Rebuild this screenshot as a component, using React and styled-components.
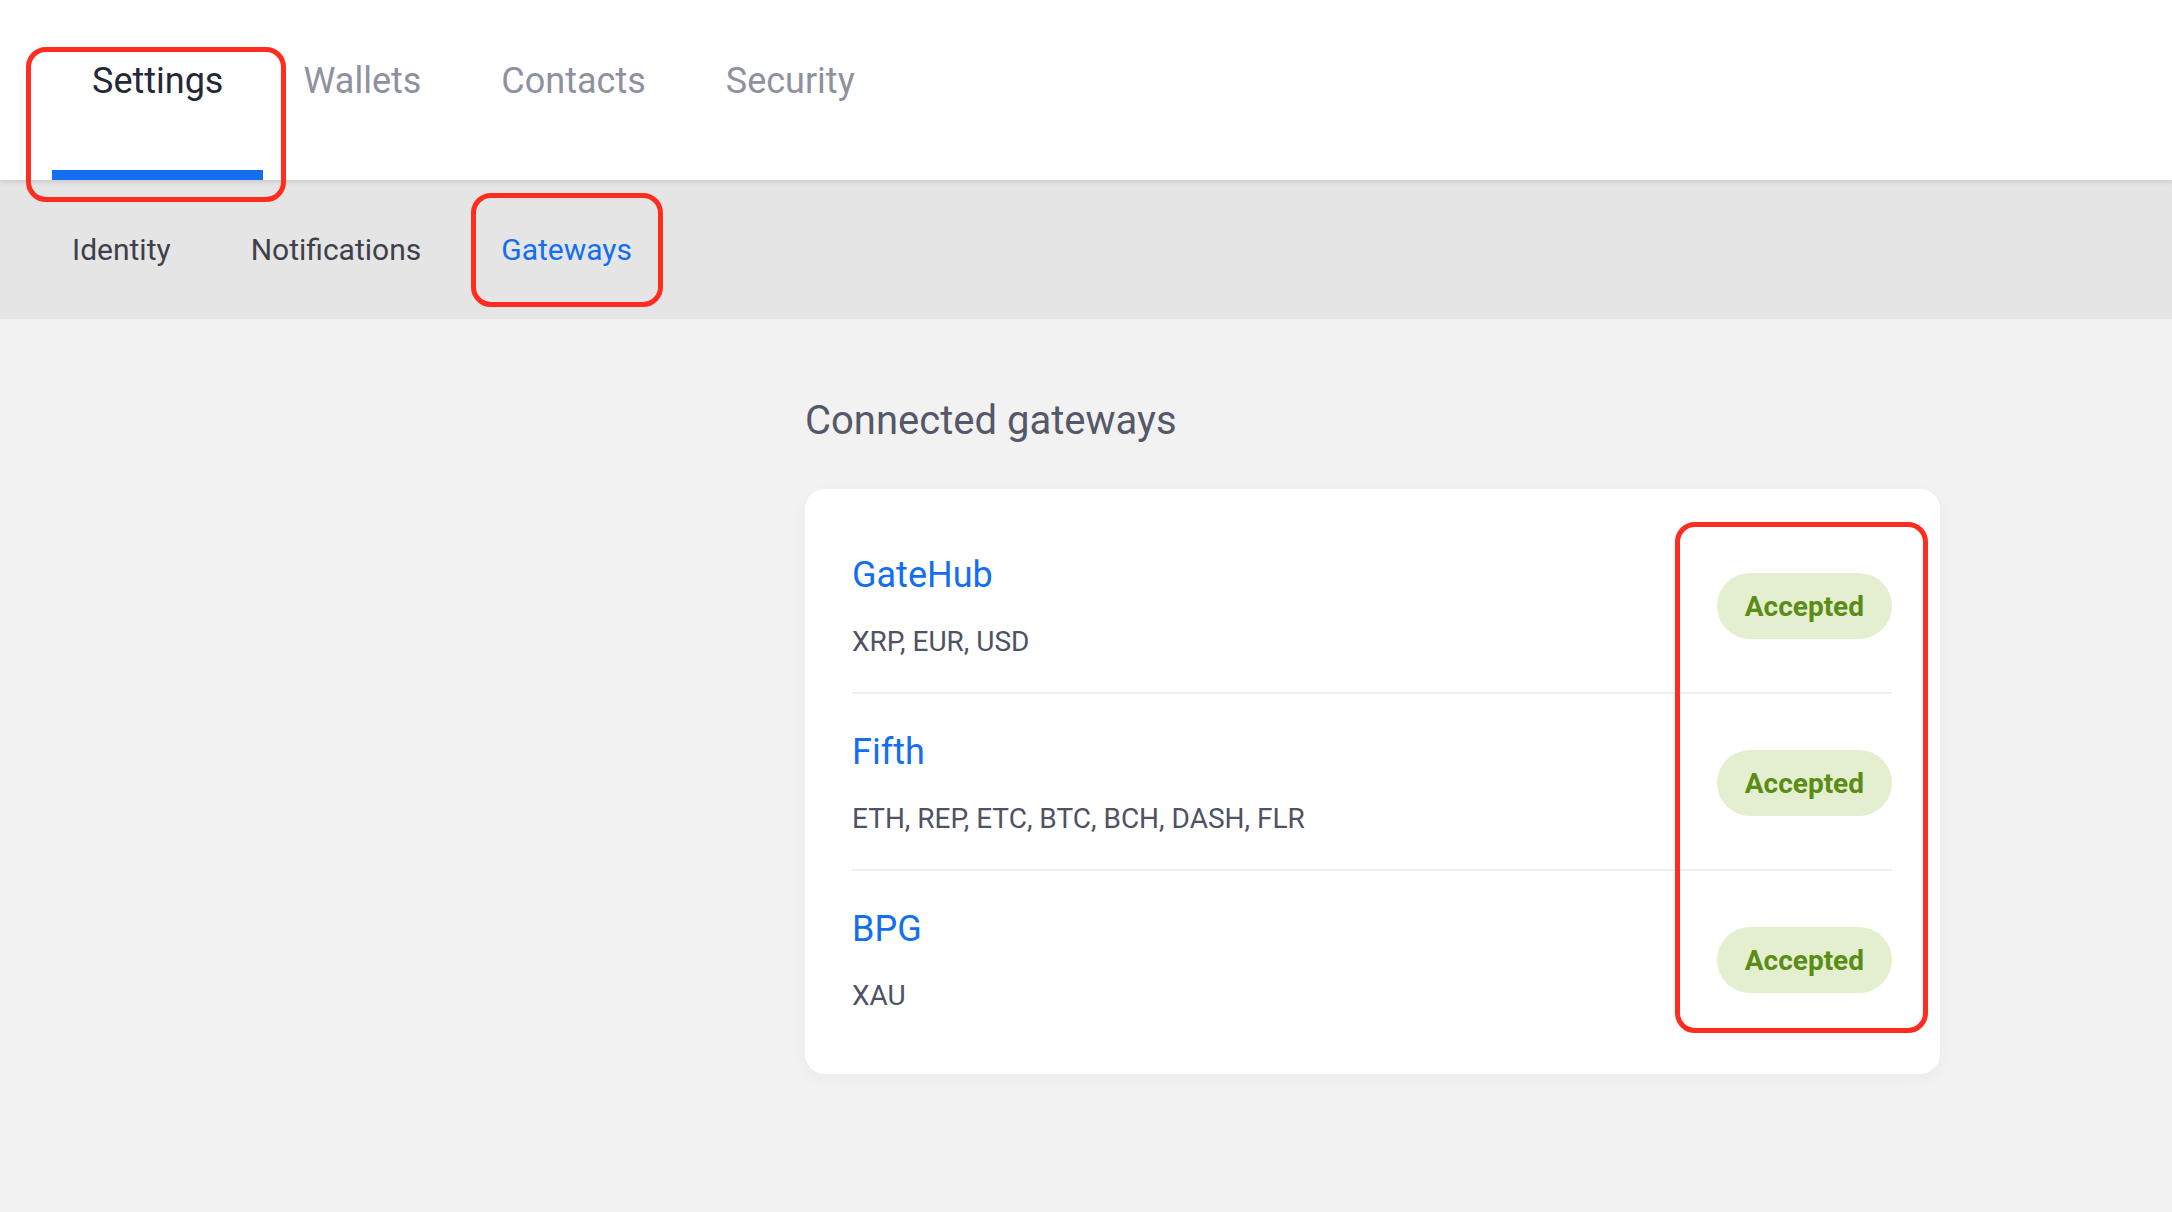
import React from 'react';
import styled, { createGlobalStyle } from 'styled-components';

const COLORS = {
  BLUE: '#136ef0',
  NAVY: '#232838',
  GREY_TAB: '#8e919e',
  TEXT: '#4f5263',
  TITLE: '#555868',
  SUBNAV_BG: '#e5e5e5',
  PAGE_BG: '#f2f2f2',
  DIVIDER: '#f0f0f0',
  GREEN_BG: '#e3efcf',
  GREEN: '#5b8c15',
  RED: '#ff2d1f',
};

const GlobalStyle = createGlobalStyle`
  * { box-sizing: border-box; }
  html, body { margin: 0; padding: 0; }
  body {
    font-family: Roboto, "Liberation Sans", sans-serif;
    background: ${COLORS.PAGE_BG};
    -webkit-font-smoothing: antialiased;
  }
`;

const Page = styled.div`
  display: flex;
  flex-direction: column;
  min-height: 100vh;
`;

const TopNav = styled.nav`
  display: flex;
  height: 180px;
  padding-left: 52px;
  background: #fff;
  box-shadow: 0 2px 4px rgba(0, 0, 0, .12);
  position: relative;
  z-index: 1;
`;

const TopTab = styled.div`
  position: relative;
  display: flex;
  justify-content: center;
  height: 180px;
  padding: 59px 40px 0;
  font-size: 36px;
  line-height: 44px;
  color: ${p => p.$active ? COLORS.NAVY : COLORS.GREY_TAB};
  border-bottom: 10px solid ${p => p.$active ? COLORS.BLUE : 'transparent'};
`;

const SubNav = styled.nav`
  display: flex;
  align-items: center;
  height: 139px;
  padding-left: 32px;
  background: ${COLORS.SUBNAV_BG};
`;

const SubTab = styled.div`
  position: relative;
  display: flex;
  align-items: center;
  height: 100%;
  padding: 0 40px;
  font-size: 30px;
  color: ${p => p.$active ? COLORS.BLUE : '#3e404b'};
`;

const Main = styled.main`
  flex: 1;
  padding: 78px 232px 80px 805px;
`;

const SectionTitle = styled.h2`
  margin: 0 0 44px;
  font-size: 40px;
  line-height: 48px;
  font-weight: 400;
  color: ${COLORS.TITLE};
`;

const Card = styled.div`
  position: relative;
  padding: 28px 48px 28px 47px;
  background: #fff;
  border-radius: 20px;
  box-shadow: 0 4px 16px rgba(0, 0, 0, .035);
`;

const Row = styled.div`
  display: flex;
  align-items: center;
  justify-content: space-between;
  padding: 35px 0 32px;
  border-top: 2px solid ${COLORS.DIVIDER};

  &:first-of-type {
    border-top: 0;
  }
`;

const Info = styled.div`
  display: flex;
  flex-direction: column;
  gap: 26px;
`;

const Name = styled.div`
  font-size: 36px;
  line-height: 46px;
  color: ${COLORS.BLUE};
`;

const Currencies = styled.div`
  font-size: 28px;
  line-height: 36px;
  color: ${COLORS.TEXT};
`;

const Badge = styled.span`
  display: inline-flex;
  align-items: center;
  height: 66px;
  padding: 0 28px;
  border-radius: 33px;
  background: ${COLORS.GREEN_BG};
  color: ${COLORS.GREEN};
  font-size: 28px;
  font-weight: 700;
`;

// red annotation outline laid over the highlighted part
const Highlight = styled.span`
  position: absolute;
  top: ${p => p.$top};
  right: ${p => p.$right};
  bottom: ${p => p.$bottom};
  left: ${p => p.$left};
  width: ${p => p.$width || 'auto'};
  border: 5px solid ${COLORS.RED};
  border-radius: 20px;
  pointer-events: none;
  z-index: 2;
`;

const topTabs = ['Settings', 'Wallets', 'Contacts', 'Security'];
const subTabs = ['Identity', 'Notifications', 'Gateways'];

const gateways = [
  { id: 'gatehub', name: 'GateHub', currencies: 'XRP, EUR, USD' },
  { id: 'fifth', name: 'Fifth', currencies: 'ETH, REP, ETC, BTC, BCH, DASH, FLR' },
  { id: 'bpg', name: 'BPG', currencies: 'XAU' },
];

const App = () => {
  return <Page>
    <GlobalStyle />
    <TopNav>
      { topTabs.map((tab) => (
        <TopTab key={tab} $active={tab === 'Settings'}>
          {tab}
          { tab === 'Settings' &&
            <Highlight $top="47px" $left="-26px" $right="-23px" $bottom="-32px" />
          }
        </TopTab>
      ))}
    </TopNav>

    <SubNav>
      { subTabs.map((tab) => (
        <SubTab key={tab} $active={tab === 'Gateways'}>
          {tab}
          { tab === 'Gateways' &&
            <Highlight $top="13px" $left="10px" $right="9px" $bottom="12px" />
          }
        </SubTab>
      ))}
    </SubNav>

    <Main>
      <SectionTitle>Connected gateways</SectionTitle>
      <Card>
        { gateways.map((gw) => (
          <Row key={gw.id}>
            <Info>
              <Name>{gw.name}</Name>
              <Currencies>{gw.currencies}</Currencies>
            </Info>
            <Badge>Accepted</Badge>
          </Row>
        ))}
        <Highlight $top="33px" $right="12px" $bottom="41px" $width="253px" />
      </Card>
    </Main>
  </Page>;
};

export default App;
